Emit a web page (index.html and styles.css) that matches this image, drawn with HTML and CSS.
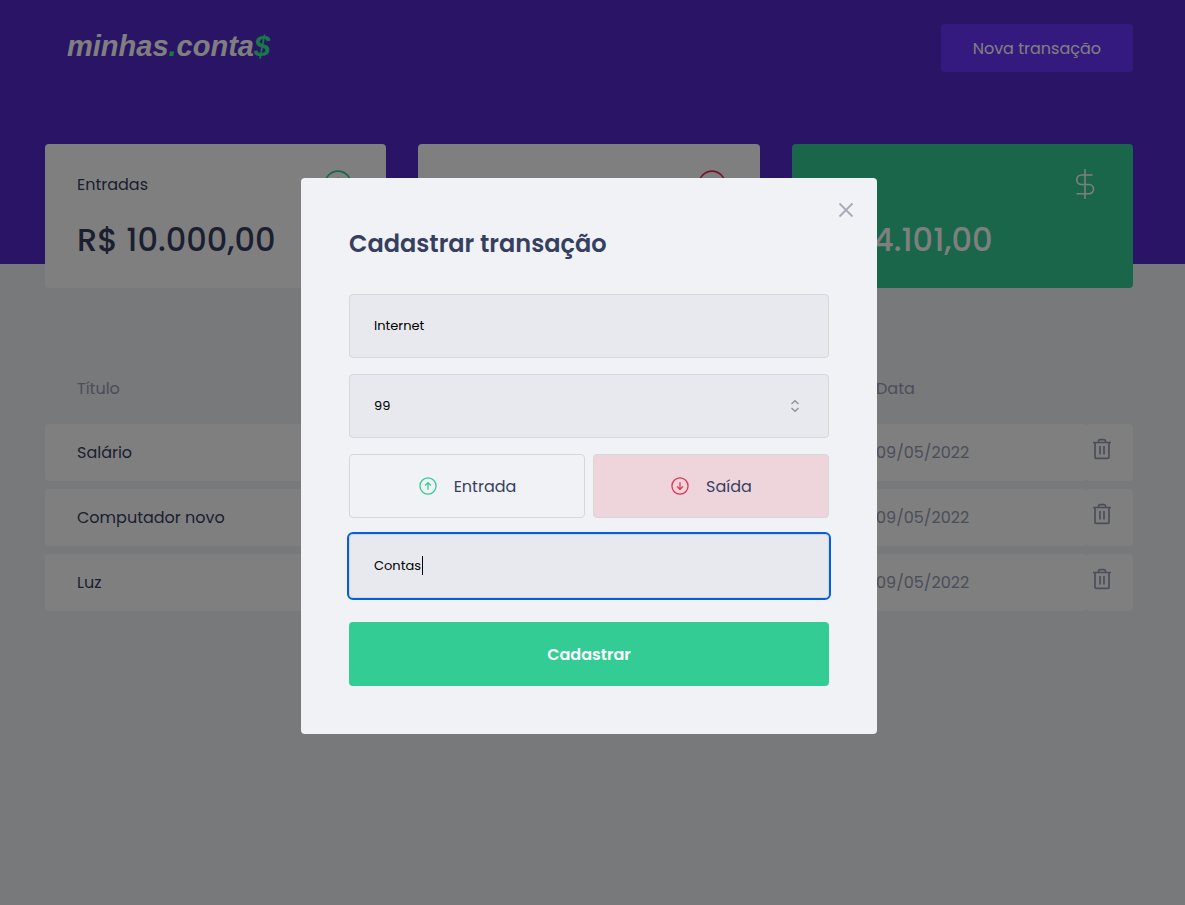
FILE: index.html
```html
<!DOCTYPE html>
<html lang="pt-BR">
<head>
<meta charset="utf-8">
<meta name="viewport" content="width=device-width, initial-scale=1">
<title>minhas.conta$</title>
<link rel="stylesheet" href="styles.css">
</head>
<body>
<svg class="sprite" aria-hidden="true">
  <symbol id="up" viewBox="0 0 32 32"><circle cx="16" cy="16" r="12.9"/><path d="M16 22V10.5M11.3 15.2 16 10.5l4.7 4.7"/></symbol>
  <symbol id="down" viewBox="0 0 32 32"><circle cx="16" cy="16" r="12.9"/><path d="M16 10v11.5M11.3 16.8 16 21.5l4.7-4.7"/></symbol>
  <symbol id="trash" viewBox="0 0 24 24"><path d="M3 5.5h18M5 5.500V20.3a1 1 0 0 0 1 1h12a1 1 0 0 0 1-1V5.5M8.500 5V4a1.6 1.6 0 0 1 1.6-1.3h3.8A1.6 1.6 0 0 1 15.5 4v1M10 9v8.5M14 9v8.5"/></symbol>
</svg>

<header class="header">
  <div class="container header-bar">
    <a class="logo" href="#">minhas<span>.</span>conta<span>$</span></a>
    <button class="new-button" type="button">Nova transação</button>
  </div>
</header>

<main class="container">
  <section class="summary">
    <article class="card">
      <div class="card-head"><p>Entradas</p><svg class="card-icon green"><use href="#up"/></svg></div>
      <strong>R$ 10.000,00</strong>
    </article>
    <article class="card">
      <div class="card-head outgoing"><svg class="card-icon red"><use href="#down"/></svg></div>
    </article>
    <article class="card total">
      <div class="card-head"><p>Total</p>
        <svg class="card-icon" viewBox="0 0 32 32"><path d="M16 1v30M23.5 7H12.500a4.7 4.7 0 0 0 0 9.500h7.500a4.600 4.600 0 0 1 0 9.200H7.500"/></svg>
      </div>
      <strong>R$ 4.101,00</strong>
    </article>
  </section>

  <table class="transactions">
    <thead>
      <tr><th>Título</th><th>Valor</th><th>Categoria</th><th class="date">Data</th><th class="action"></th></tr>
    </thead>
    <tbody>
      <tr><td class="name">Salário</td><td></td><td></td><td>09/05/2022</td><td class="action"><button type="button" aria-label="Excluir"><svg><use href="#trash"/></svg></button></td></tr>
      <tr><td class="name">Computador novo</td><td></td><td></td><td>09/05/2022</td><td class="action"><button type="button" aria-label="Excluir"><svg><use href="#trash"/></svg></button></td></tr>
      <tr><td class="name">Luz</td><td></td><td></td><td>09/05/2022</td><td class="action"><button type="button" aria-label="Excluir"><svg><use href="#trash"/></svg></button></td></tr>
    </tbody>
  </table>
</main>

<div class="overlay">
  <div class="modal" role="dialog" aria-modal="true" aria-labelledby="modal-title">
    <button class="close" type="button" aria-label="Fechar"><svg viewBox="0 0 16 16"><path d="M1.5 1.5l13 13M14.5 1.5l-13 13"/></svg></button>
    <form class="form">
      <h2 id="modal-title">Cadastrar transação</h2>
      <input class="field" type="text" aria-label="Título" value="Internet">
      <div class="field-wrap">
        <input class="field" type="number" aria-label="Valor" value="99">
        <svg class="spinner" viewBox="0 0 10 14"><path d="M1.5 5 5 1.7 8.5 5M1.5 9 5 12.3 8.5 9"/></svg>
      </div>
      <div class="types">
        <button class="type" type="button" aria-pressed="false"><svg class="green"><use href="#up"/></svg><span>Entrada</span></button>
        <button class="type selected" type="button" aria-pressed="true"><svg class="red"><use href="#down"/></svg><span>Saída</span></button>
      </div>
      <div class="field-wrap">
        <input class="field focused" type="text" aria-label="Categoria" value="Contas">
        <span class="caret"></span>
      </div>
      <button class="submit" type="submit">Cadastrar</button>
    </form>
  </div>
</div>
</body>
</html>
```

FILE: styles.css
```css
:root {
  --green: #33cc95;
  --red: #e52e4d;
  --title: #363f5f;
  --text: #969cb3;
  --gutter: 7px;
}

* {
  box-sizing: border-box;
  margin: 0;
  padding: 0;
}

body,
button,
input {
  font-family: Poppins, Inter, "Open Sans", sans-serif;
  font-size: 16px;
}

body {
  min-height: 100vh;
  background: #f0f2f5;
  color: var(--title);
}

button {
  border: 0;
  cursor: pointer;
}

svg {
  display: block;
  fill: none;
  stroke: currentColor;
}

.sprite {
  position: absolute;
  width: 0;
  height: 0;
}

.green { color: var(--green); }
.red { color: var(--red); }

.header {
  min-height: 264px;
  padding: 24px var(--gutter) 0 0;
  background: #5429cc;
}

.container {
  max-width: 1120px;
  margin: 0 auto;
  padding: 0 16px;
}

main.container {
  max-width: 1127px;
  padding-right: calc(16px + var(--gutter));
}

.header-bar {
  display: flex;
  align-items: center;
  justify-content: space-between;
}

.logo {
  padding: 0 0 4px 22px;
  color: #fff;
  font: italic bold 29px/44px "Liberation Sans", Arial, sans-serif;
  text-decoration: none;
}

.logo span { color: #33ee95; }

.new-button {
  height: 48px;
  padding: 0 32px;
  border-radius: 4px;
  background: #6933ff;
  color: #fff;
}

.summary {
  display: grid;
  grid-template-columns: repeat(3, 1fr);
  gap: 32px;
  margin-top: -120px;
}

.card {
  padding: 24px 32px;
  border-radius: 4px;
  background: #fff;
}

.card.total {
  background: var(--green);
  color: #fff;
}

.card-head {
  display: flex;
  align-items: center;
  justify-content: space-between;
}

.card-head.outgoing { justify-content: flex-end; }

.card-icon {
  width: 32px;
  height: 32px;
  stroke-width: 1.6;
}

.card strong {
  display: block;
  margin-top: 16px;
  font-size: 32px;
  font-weight: 500;
  line-height: 48px;
}

.transactions {
  width: 100%;
  margin-top: 64px;
  border-collapse: separate;
  border-spacing: 0 8px;
  table-layout: fixed;
  color: var(--text);
}

.transactions th {
  height: 56px;
  padding: 0 32px;
  font-weight: 400;
  text-align: left;
}

.transactions td {
  height: 57px;
  padding: 0 32px;
  border-radius: 4px;
  background: #fff;
}

.transactions .name { color: var(--title); }
.transactions .date { width: 242px; }

.transactions .action {
  width: 47px;
  padding: 13px 4px;
  vertical-align: top;
}

.action button {
  display: block;
  background: none;
  color: var(--text);
}

.action svg {
  width: 24px;
  height: 24px;
  stroke-width: 1.7;
}

.overlay {
  position: fixed;
  inset: 0;
  display: flex;
  align-items: center;
  justify-content: center;
  padding: var(--gutter) var(--gutter) 0 0;
  background: rgba(0, 0, 0, 0.5);
}

.modal {
  position: relative;
  width: 100%;
  max-width: 576px;
  padding: 48px;
  border-radius: 4px;
  background: #f0f2f5;
}

.close {
  position: absolute;
  top: 24px;
  right: 23px;
  background: none;
  color: #a9aab8;
}

.close svg {
  width: 16px;
  height: 16px;
  stroke-width: 1.8;
}

.form {
  display: flex;
  flex-direction: column;
  gap: 16px;
}

.form h2 {
  margin-bottom: 16px;
  font-size: 24px;
  font-weight: 600;
  line-height: 36px;
}

.field-wrap { position: relative; }

.field {
  display: block;
  width: 100%;
  height: 64px;
  padding: 0 24px;
  border: 1px solid #d7d7d7;
  border-radius: 4px;
  background: #e7e9ee;
  color: #000;
  font-size: 13px;
  appearance: textfield;
}

.field.focused { outline: 2px solid #0060df; }

.spinner {
  position: absolute;
  top: 25px;
  right: 29px;
  width: 10px;
  height: 14px;
  color: #8d8f9b;
  stroke-width: 1.3;
}

.caret {
  position: absolute;
  top: 22px;
  left: 73px;
  width: 1px;
  height: 19px;
  background: #000;
}

.types {
  display: grid;
  grid-template-columns: 1fr 1fr;
  gap: 8px;
}

.type {
  display: flex;
  align-items: center;
  justify-content: center;
  gap: 16px;
  height: 64px;
  border: 1px solid #d7d7d7;
  border-radius: 4px;
  background: transparent;
  color: var(--title);
}

.type.selected { background: #eed5db; }

.type svg {
  width: 20px;
  height: 20px;
  stroke-width: 2;
}

.submit {
  height: 64px;
  margin-top: 8px;
  border-radius: 4px;
  background: var(--green);
  color: #fff;
  font-weight: 600;
}
```
